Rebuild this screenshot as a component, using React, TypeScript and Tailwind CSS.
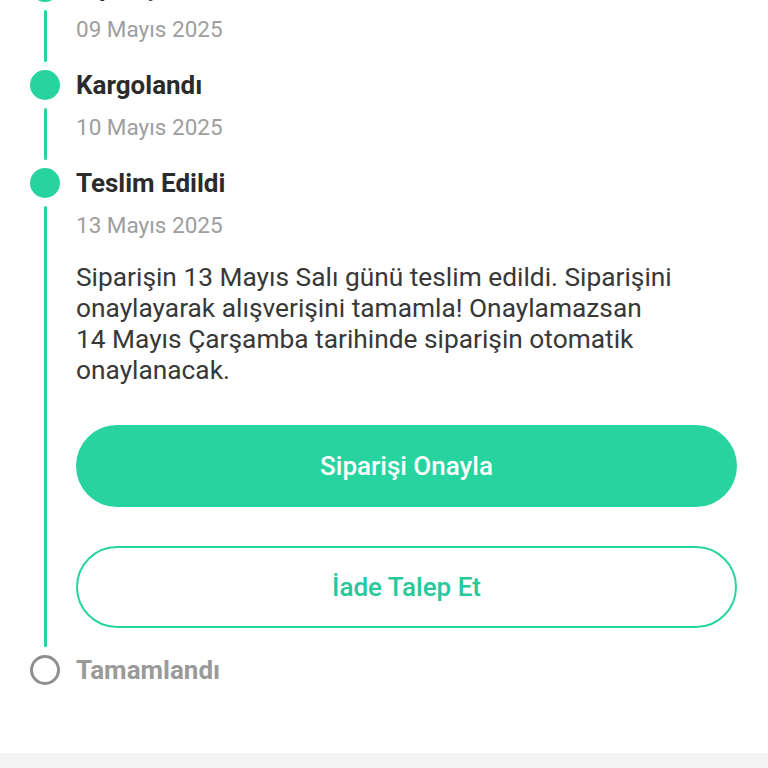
import React from 'react';

type Step = {
  title: string;
  date?: string;
  done: boolean;
  last?: boolean;
};

const GREEN = 'bg-[#27d4a0]';

const StepRow: React.FC<{ step: Step; children?: React.ReactNode }> = ({ step, children }) => {
  return (
    <div className="flex gap-4">
      <div className="flex w-[30px] shrink-0 flex-col items-center">
        {step.done ? (
          <div className={`h-[30px] w-[30px] rounded-full ${GREEN}`} />
        ) : (
          <div className="h-[30px] w-[30px] rounded-full border-[3px] border-[#8f8f8f]" />
        )}
        {!step.last && <div className={`my-2 w-[3px] flex-1 rounded-full ${GREEN}`} />}
      </div>
      <div className={`min-w-0 flex-1 ${step.last ? '' : 'pb-[25px]'}`}>
        <div
          className={`text-[26px] leading-[30px] font-bold ${
            step.done ? 'text-[#2b2b2b]' : 'text-[#9a9a9a]'
          }`}
        >
          {step.title}
        </div>
        {step.date && (
          <div className="mt-[11px] text-[22.5px] leading-[32px] text-[#9e9e9e]">{step.date}</div>
        )}
        {children}
      </div>
    </div>
  );
};

export default function App() {
  return (
    <div
      className="flex h-[768px] w-[768px] flex-col overflow-hidden bg-white"
      style={{ fontFamily: 'Roboto, "Noto Sans", sans-serif' }}
    >
      <div className="flex-1 pl-[30px] pr-[31px]">
        <div className="mt-[-28px]">
          <StepRow step={{ title: 'Sipariş Alındı', date: '09 Mayıs 2025', done: true }} />
          <StepRow step={{ title: 'Kargolandı', date: '10 Mayıs 2025', done: true }} />
          <StepRow step={{ title: 'Teslim Edildi', date: '13 Mayıs 2025', done: true }}>
            <p className="mt-[21px] text-[26.3px] leading-[31px] text-[#383838]">
              Siparişin 13 Mayıs Salı günü teslim edildi. Siparişini
              <br />
              onaylayarak alışverişini tamamla! Onaylamazsan
              <br />
              14 Mayıs Çarşamba tarihinde siparişin otomatik
              <br />
              onaylanacak.
            </p>
            <button
              className={`mt-[39px] flex h-[82px] w-full items-center justify-center rounded-full ${GREEN} text-[26px] font-medium text-white`}
            >
              Siparişi Onayla
            </button>
            <button className="mt-[39px] mb-[2px] flex h-[82px] w-full items-center justify-center rounded-full border-2 border-[#27d4a0] bg-white text-[26px] font-medium text-[#27c89a]">
              İade Talep Et
            </button>
          </StepRow>
          <StepRow step={{ title: 'Tamamlandı', done: false, last: true }} />
        </div>
      </div>
      <div className="h-[15px] bg-[#f4f4f4]" />
    </div>
  );
}
